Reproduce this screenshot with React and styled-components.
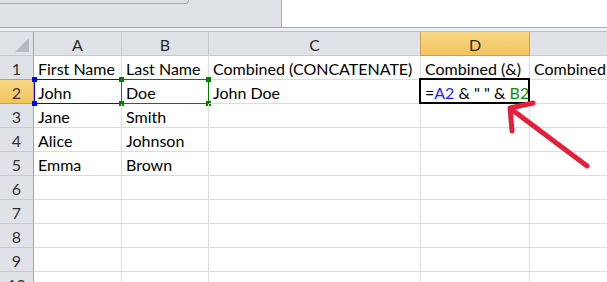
import React from "react";
import styled, { createGlobalStyle, css } from "styled-components";

const GlobalStyle = createGlobalStyle`
  html, body {
    margin: 0;
    padding: 0;
    background: #ffffff;
    overflow: hidden;
  }
  body {
    font-family: "Lato", "Liberation Sans", sans-serif;
  }
`;

const Page = styled.div`
  width: 607px;
  height: 282px;
  overflow: hidden;
  position: relative;
  background: #ffffff;
`;

const TopBar = styled.div`
  display: flex;
  height: 27px;
  border-bottom: 1px solid #a8adb4;
`;

const FormulaPanel = styled.div`
  width: 282px;
  background: #dfe2e7;
  border-right: 1px solid #a8adb4;
  box-sizing: border-box;
`;

const TabEdge = styled.div`
  width: 188px;
  height: 3px;
  border-bottom: 1px solid #a8adb4;
  border-right: 1px solid #a8adb4;
  border-bottom-right-radius: 4px;
  background: #dfe2e7;
`;

const Spacer = styled.div`
  height: 3px;
  background: #eef0f2;
  border-bottom: 1px solid #b9bec5;
`;

// column E is wider than the window, so its letter sits off-screen
const Sheet = styled.div`
  position: relative;
  display: grid;
  grid-template-columns: 34px 88px 87px 212px 109px 220px;
  grid-auto-rows: 24px;
  width: max-content;
`;

const cellText = css`
  font-family: "Lato", "Liberation Sans", sans-serif;
  font-size: 16px;
  line-height: 1;
`;

const ColHead = styled.div`
  ${cellText}
  display: flex;
  align-items: center;
  justify-content: center;
  box-sizing: border-box;
  color: #2a2a2a;
  background: #dfe2e7;
  border-right: 1px solid #c6cad0;
  border-bottom: 1px solid #c6cad0;
  padding-top: 2px;
  ${(p) =>
    p.$active &&
    css`
      background: linear-gradient(#f9d985, #f2c35f);
      border-right-color: #d99b43;
      border-left: 1px solid #d99b43;
      border-bottom-color: #d99b43;
      margin-left: -1px;
    `}
`;

const Corner = styled.div`
  position: relative;
  box-sizing: border-box;
  background: #dfe2e7;
  border-right: 1px solid #9fa5ad;
  border-bottom: 1px solid #c6cad0;
`;

const CornerMark = styled.div`
  position: absolute;
  right: 4px;
  bottom: 3px;
  width: 0;
  height: 0;
  border-left: 14px solid transparent;
  border-bottom: 14px solid #b5bac1;
`;

const RowHead = styled.div`
  ${cellText}
  display: flex;
  align-items: center;
  justify-content: center;
  box-sizing: border-box;
  color: #333333;
  background: #dfe2e7;
  border-right: 1px solid #9fa5ad;
  border-bottom: 1px solid #c6cad0;
  padding-top: 2px;
  ${(p) =>
    p.$active &&
    css`
      background: linear-gradient(#f9d985, #f2c35f);
      border-right-color: #d99b43;
      border-bottom-color: #d99b43;
      border-top: 1px solid #d99b43;
      margin-top: -1px;
    `}
`;

const Cell = styled.div`
  ${cellText}
  position: relative;
  display: flex;
  align-items: center;
  box-sizing: border-box;
  padding: 3px 0 0 4px;
  color: #000000;
  white-space: nowrap;
  overflow: visible;
  border-right: 1px solid #dadcdd;
  border-bottom: 1px solid #dadcdd;
`;

const RefBox = styled.div`
  position: absolute;
  left: ${(p) => (p.$first ? "0" : "-1px")};
  top: -1px;
  right: -1px;
  bottom: -1px;
  border: 1px solid ${(p) => p.$color};
  pointer-events: none;
`;

const Handle = styled.span`
  position: absolute;
  width: 5px;
  height: 5px;
  background: ${(p) => p.$color};
  ${(p) => (p.$top ? "top: -3px;" : "bottom: -3px;")}
  ${(p) => (p.$left ? "left: -3px;" : "right: -3px;")}
`;

const ActiveBox = styled.div`
  position: absolute;
  left: -2px;
  top: -2px;
  right: -1px;
  bottom: -1px;
  border: 2px solid #000000;
  pointer-events: none;
`;

const Ref = styled.span`
  color: ${(p) => p.$color};
`;

const Arrow = styled.svg`
  position: absolute;
  left: 0;
  top: 0;
  pointer-events: none;
`;

const columns = ["A", "B", "C", "D", "E"];

const data = [
  ["First Name", "Last Name", "Combined (CONCATENATE)", "Combined (&)", "Combined"],
  ["John", "Doe", "John Doe", null, ""],
  ["Jane", "Smith", "", "", ""],
  ["Alice", "Johnson", "", "", ""],
  ["Emma", "Brown", "", "", ""],
  ["", "", "", "", ""],
  ["", "", "", "", ""],
  ["", "", "", "", ""],
  ["", "", "", "", ""],
  ["", "", "", "", ""],
];

function RefOutline({ color, first }) {
  return (
    <RefBox $color={color} $first={first}>
      <Handle $color={color} $top $left />
      <Handle $color={color} $top />
      <Handle $color={color} $left />
      <Handle $color={color} />
    </RefBox>
  );
}

function Formula() {
  return (
    <>
      =<Ref $color="#1f1fff">A2</Ref>&nbsp;&amp; " " &amp;&nbsp;
      <Ref $color="#138a13">B2</Ref>
    </>
  );
}

export default function App() {
  return (
    <Page>
      <GlobalStyle />
      <TopBar>
        <FormulaPanel>
          <TabEdge />
        </FormulaPanel>
      </TopBar>
      <Spacer />
      <Sheet>
        <Corner>
          <CornerMark />
        </Corner>
        {columns.map((c) => (
          <ColHead key={c} $active={c === "D"}>
            {c}
          </ColHead>
        ))}
        {data.map((row, r) => (
          <React.Fragment key={r}>
            <RowHead $active={r === 1}>{r + 1}</RowHead>
            {row.map((value, c) => {
              const isA2 = r === 1 && c === 0;
              const isB2 = r === 1 && c === 1;
              const isD2 = r === 1 && c === 3;
              return (
                <Cell key={c}>
                  {isD2 ? <Formula /> : value}
                  {isA2 && <RefOutline color="#0000ff" first />}
                  {isB2 && <RefOutline color="#008000" />}
                  {isD2 && <ActiveBox />}
                </Cell>
              );
            })}
          </React.Fragment>
        ))}
      </Sheet>
      <Arrow width="607" height="282" viewBox="0 0 607 282">
        <g
          fill="none"
          stroke="#e3203b"
          strokeWidth="5"
          strokeLinecap="round"
          strokeLinejoin="round"
        >
          <line x1="587" y1="166" x2="511" y2="109" />
          <polyline points="533,103 510,108 512,131" />
        </g>
      </Arrow>
    </Page>
  );
}
